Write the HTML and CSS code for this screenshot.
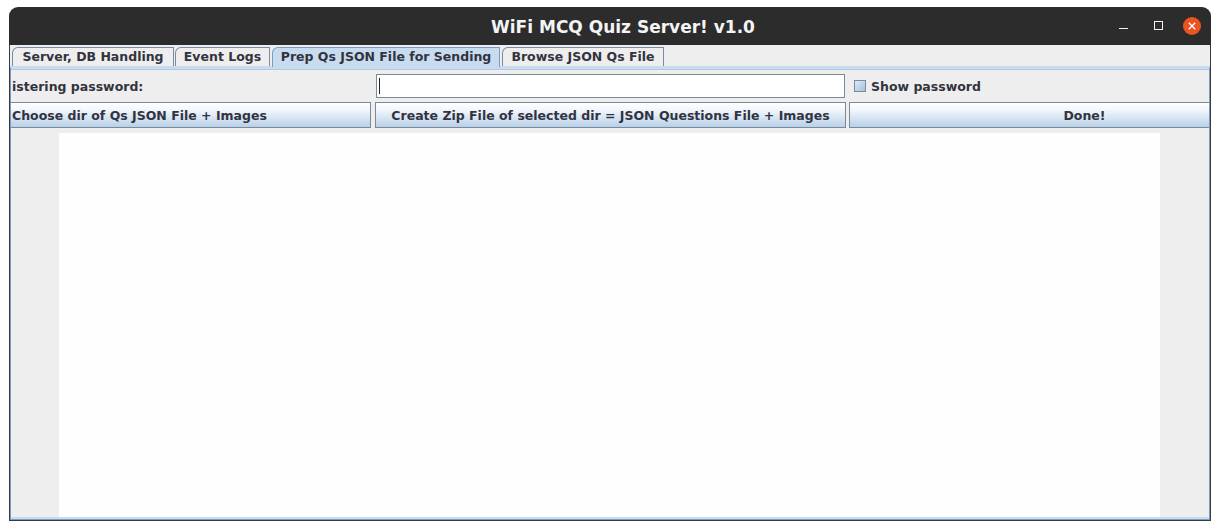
FILE: index.html
```html
<!DOCTYPE html>
<html>
<head>
<meta charset="utf-8">
<link rel="stylesheet" href="styles.css">
</head>
<body>
<div class="window">
  <div class="titlebar">
    <div class="title">WiFi MCQ Quiz Server! v1.0</div>
    <div class="controls">
      <svg class="ctl-min" width="10" height="10" viewBox="0 0 10 10"><line x1="0" y1="7.5" x2="9" y2="7.5" stroke="#f2f2f2" stroke-width="1"/></svg>
      <svg class="ctl-max" width="10" height="10" viewBox="0 0 10 10"><rect x="1.5" y="0.5" width="8" height="8" fill="none" stroke="#f2f2f2" stroke-width="1"/></svg>
      <svg class="ctl-close" width="18" height="18" viewBox="0 0 18 18"><circle cx="9" cy="9" r="9" fill="#e95420"/><path d="M5.8 5.8 L12.2 12.2 M12.2 5.8 L5.8 12.2" stroke="#ffffff" stroke-width="1.3"/></svg>
    </div>
  </div>
  <div class="body">
    <div class="tabs">
      <div class="tab t1">Server, DB Handling</div>
      <div class="tab t2">Event Logs</div>
      <div class="tab t3 selected">Prep Qs JSON File for Sending</div>
      <div class="tab t4">Browse JSON Qs File</div>
    </div>
    <div class="panel">
      <div class="row1">
        <div class="label">istering password:</div>
        <div class="field"><span class="caret"></span></div>
        <div class="check"><span class="box"></span><span>Show password</span></div>
      </div>
      <div class="row2">
        <div class="btn b1">Choose dir of Qs JSON File + Images</div>
        <div class="btn b2">Create Zip File of selected dir = JSON Questions File + Images</div>
        <div class="btn b3">Done!</div>
      </div>
      <div class="content">
        <div class="white"></div>
      </div>
    </div>
  </div>
</div>
</body>
</html>
```
FILE: styles.css
```css
html, body {
  margin: 0;
  padding: 0;
  background: #ffffff;
}
body {
  width: 1220px;
  height: 530px;
  overflow: hidden;
}
.window {
  margin: 7px 0 0 9px;
  width: 1202px;
  height: 514px;
  box-sizing: border-box;
  display: flex;
  flex-direction: column;
}
.titlebar {
  height: 38px;
  background: #2c2c2c;
  border-radius: 9px 9px 0 0;
  position: relative;
  display: flex;
  align-items: center;
  justify-content: center;
}
.title {
  color: #f4f4f4;
  font-family: "DejaVu Sans", sans-serif;
  font-weight: bold;
  font-size: 17px;
  margin-left: 26px;
  margin-top: 1px;
}
.controls {
  position: absolute;
  right: 10px;
  top: 10px;
  height: 18px;
  display: flex;
  align-items: center;
}
.ctl-min { margin-right: 24px; }
.ctl-max { margin-right: 20px; }
.body {
  flex: 1;
  min-height: 0;
  background: #eeeeee;
  border-left: 1px solid #3a3a3a;
  border-right: 1px solid #3a3a3a;
  border-bottom: 1px solid #3a3a3a;
  display: flex;
  flex-direction: column;
  font-family: "DejaVu Sans", sans-serif;
  font-weight: bold;
  font-size: 12.5px;
  color: #333340;
}
.tabs {
  height: 21px;
  display: flex;
  align-items: flex-end;
  padding-left: 2px;
  gap: 1px;
}
.tab {
  height: 19px;
  box-sizing: border-box;
  border: 1px solid #7a8aa0;
  border-bottom: none;
  border-top-left-radius: 6px 6px;
  display: flex;
  align-items: center;
  justify-content: center;
  padding-bottom: 1px;
  background: #eeeeee;
}
.t1 { width: 162px; }
.t2 { width: 95px; }
.t3 { width: 228px; margin-left: 1px; }
.t4 { width: 162px; margin-left: 1px; }
.tab.selected {
  background: #c8dcf0;
  border-color: #7a9ac8;
  height: 20px;
  padding-bottom: 2px;
  margin-bottom: -1px;
  position: relative;
  z-index: 2;
}
.panel {
  flex: 1;
  min-height: 0;
  border: 1px solid #7a9ac8;
  border-top: 3px solid #c8dcf0;
  background: #eeeeee;
  display: flex;
  flex-direction: column;
  position: relative;
  overflow: hidden;
}
.panel::before {
  content: "";
  position: absolute;
  left: 0;
  right: 0;
  top: 0;
  height: 1px;
  background: #b4c8e0;
}
.row1 {
  height: 26px;
  margin-top: 4px;
  display: flex;
  align-items: center;
  flex-shrink: 0;
}
.label {
  width: 364px;
  padding-left: 1px;
}
.field {
  width: 469px;
  height: 24px;
  box-sizing: border-box;
  background: #ffffff;
  border: 1px solid #7a8a99;
  display: flex;
  align-items: center;
  padding-left: 2px;
}
.caret {
  width: 1px;
  height: 16px;
  background: #222;
}
.check {
  margin-left: 9px;
  display: flex;
  align-items: center;
  gap: 5px;
}
.box {
  width: 12px;
  height: 12px;
  box-sizing: border-box;
  border: 1px solid #7a8aa0;
  background: linear-gradient(135deg, #dce8f4, #a8c0dc);
}
.row2 {
  margin-top: 3px;
  margin-left: -1px;
  height: 26px;
  display: flex;
  flex-shrink: 0;
}
.btn {
  box-sizing: border-box;
  border: 1px solid #7a8a99;
  background: linear-gradient(#ffffff 0%, #f4f8fc 25%, #d8e6f4 60%, #b8d0e8 100%);
  display: flex;
  align-items: center;
  justify-content: center;
  white-space: nowrap;
}
.b1 {
  flex: 0 0 361px;
  justify-content: flex-start;
  padding-left: 1px;
}
.b2 {
  flex: 0 0 471px;
  margin-left: 4px;
}
.b3 {
  flex: 0 0 471px;
  margin-left: 3px;
}
.content {
  flex: 1;
  margin-top: 5px;
  padding-left: 48px;
  padding-right: 49px;
  display: flex;
  border-bottom: 2px solid #c8dcf0;
}
.white {
  flex: 1;
  background: #fefefe;
}
```
